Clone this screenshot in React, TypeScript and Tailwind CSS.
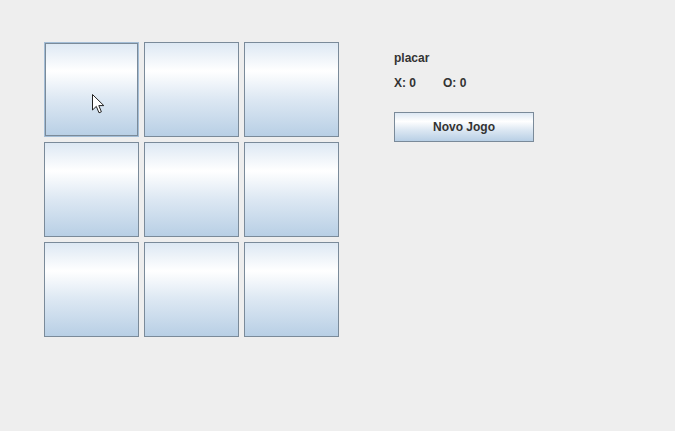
import React from "react";

const cellBg =
  "bg-[linear-gradient(to_bottom,#dde8f3_0%,#ffffff_30%,#dde8f3_60%,#b8cfe5_100%)]";

function Cell({ focused }: { focused?: boolean }) {
  if (focused) {
    return (
      <div
        className={`relative w-[95px] h-[95px] border border-[#a3bdd6] shadow-[inset_0_0_0_1px_#7a8a99] ${cellBg}`}
      >
        <svg
          className="absolute left-[47px] top-[51px]"
          width="14"
          height="21"
          viewBox="0 0 14 21"
        >
          <path
            d="M0.5 0.5 L0.5 16 L4.3 12.4 L7 18.8 L9.4 17.8 L6.8 11.6 L11.8 11.6 Z"
            fill="#ffffff"
            stroke="#222222"
            strokeWidth="1"
            strokeLinejoin="round"
          />
        </svg>
      </div>
    );
  }
  return <div className={`w-[95px] h-[95px] border border-[#7a8a99] ${cellBg}`} />;
}

export default function App() {
  return (
    <div
      className="w-[675px] h-[431px] bg-[#eeeeee] flex text-[#333333] font-bold text-[12px]"
      style={{ fontFamily: '"Liberation Sans", Arial, sans-serif' }}
    >
      <div className="pt-[42px] pl-[44px]">
        <div className="grid grid-cols-[95px_95px_95px] gap-[5px]">
          <Cell focused />
          <Cell />
          <Cell />
          <Cell />
          <Cell />
          <Cell />
          <Cell />
          <Cell />
          <Cell />
        </div>
      </div>
      <div className="pl-[55px] pt-[51px] flex flex-col">
        <div className="leading-[14px]">placar</div>
        <div className="leading-[14px] mt-[11px] flex">
          <span className="w-[49px]">X: 0</span>
          <span>O: 0</span>
        </div>
        <div
          className={`mt-[22px] w-[140px] h-[30px] border border-[#7a8a99] flex items-center justify-center leading-[14px] ${cellBg}`}
        >
          Novo Jogo
        </div>
      </div>
    </div>
  );
}
